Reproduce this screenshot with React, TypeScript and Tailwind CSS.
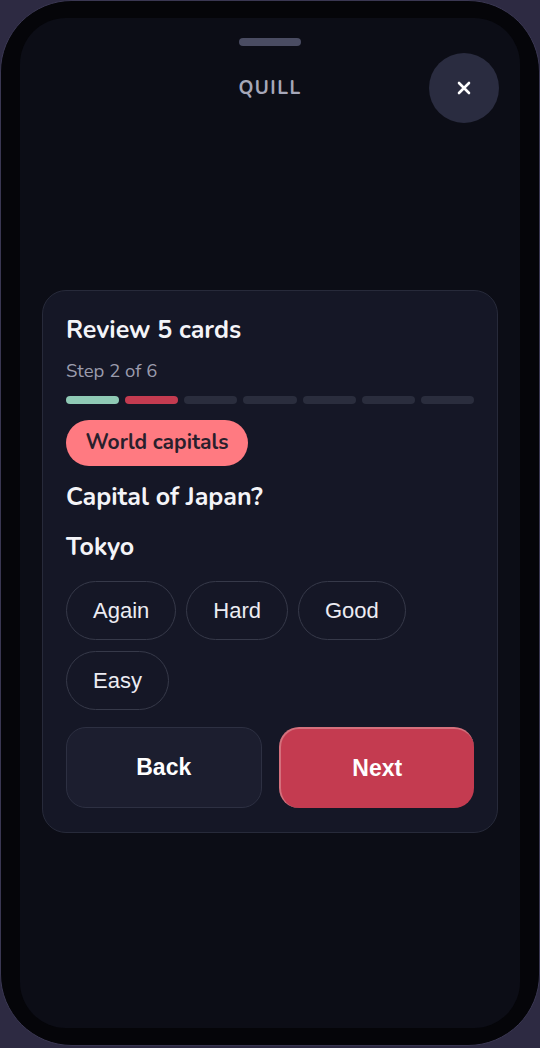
import React from "react";

const segs = ["bg-[#8fcab5]", "bg-[#c43b50]", "bg-[#2a2d3d]", "bg-[#2a2d3d]", "bg-[#2a2d3d]", "bg-[#2a2d3d]", "bg-[#2a2d3d]"];

export default function App() {
  return (
    <div className="w-[540px] h-[1048px] bg-[#2d2a42] overflow-hidden font-['Nunito','Lato',sans-serif]">
      <div className="w-[540px] h-[1046px] bg-[#050509] rounded-[72px] border border-[#3a3752] p-[19px] pt-[17px]">
        <div className="w-full h-[1010px] bg-[#0c0d16] rounded-[46px] flex flex-col items-center">
          <div className="mt-[20px] w-[62px] h-[8px] rounded-full bg-[#4a4c62]" />
          <div className="w-full relative flex items-center justify-center h-[70px] mt-[7px]">
            <span className="text-[19px] font-bold tracking-[1.5px] text-[#a6a7b9]">QUILL</span>
            <button className="absolute right-[21px] top-0 w-[70px] h-[70px] rounded-full bg-[#2a2c40] flex items-center justify-center">
              <svg width="16" height="16" viewBox="0 0 16 16" fill="none" stroke="white" strokeWidth="2.6" strokeLinecap="round">
                <path d="M3 3 L13 13 M13 3 L3 13" />
              </svg>
            </button>
          </div>
          <div className="mt-[167px] w-[456px] rounded-[24px] bg-[#151726] border border-[#272a3a] px-[23px] pt-[24px] pb-[24px] flex flex-col">
            <div className="text-[25px] leading-[30px] font-bold text-[#f4f4f8]">Review 5 cards</div>
            <div className="mt-[14px] text-[18.5px] leading-[24px] text-[#9b9cad]">Step 2 of 6</div>
            <div className="mt-[13px] flex gap-[6px]">
              {segs.map((c, i) => (
                <div key={i} className={`flex-1 h-[8px] rounded-full ${c}`} />
              ))}
            </div>
            <div className="mt-[16px] flex">
              <span className="h-[46px] px-[19.5px] rounded-full bg-[#ff7a81] text-[#2a1f2c] text-[21px] font-bold flex items-center">World capitals</span>
            </div>
            <div className="mt-[16px] text-[25px] leading-[30px] font-bold text-[#f4f4f8]">Capital of Japan?</div>
            <div className="mt-[20px] text-[25px] leading-[30px] font-bold text-[#f4f4f8]">Tokyo</div>
            <div className="mt-[19px] flex flex-wrap gap-x-[10px] gap-y-[11px] font-['Liberation_Sans',Arial,sans-serif]">
              {["Again", "Hard", "Good", "Easy"].map((t) => (
                <button key={t} className="h-[59px] px-[26px] rounded-full border border-[#363949] text-[22px] text-[#ececf2] bg-transparent">
                  {t}
                </button>
              ))}
            </div>
            <div className="mt-[17px] grid grid-cols-2 gap-[17px] font-['Liberation_Sans',Arial,sans-serif]">
              <button className="h-[81px] rounded-[20px] bg-[#1c1e2f] border border-[#2d3042] text-[23px] font-bold text-white">Back</button>
              <button className="h-[81px] rounded-[20px] bg-[#c43b50] border-t-2 border-l-2 border-[#d4707c] text-[23px] font-bold text-white">Next</button>
            </div>
          </div>
        </div>
      </div>
    </div>
  );
}
